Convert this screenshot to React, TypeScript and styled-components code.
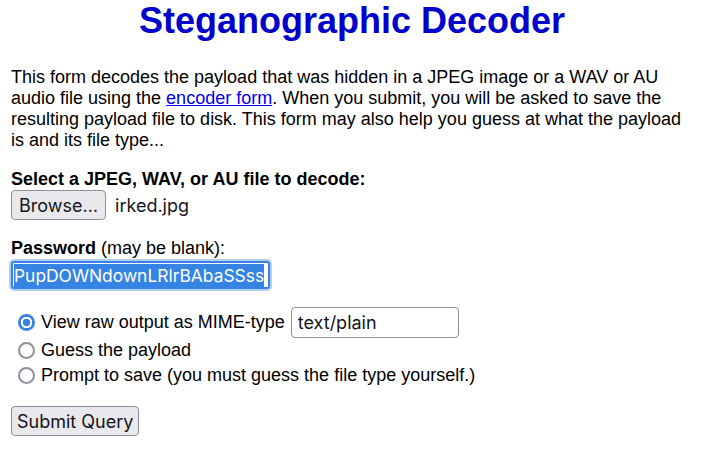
import styled, { createGlobalStyle } from "styled-components";

const GlobalStyle = createGlobalStyle`
  html, body {
    margin: 0;
    padding: 0;
    background: #ffffff;
  }
  body {
    font-family: "Liberation Sans", Arial, sans-serif;
    font-size: 18px;
    color: #000000;
  }
`;

const Page = styled.div`
  padding: 0 8px 0 11px;
`;

const Heading = styled.h1`
  margin: 0 0 25px 0;
  text-align: center;
  font-size: 36px;
  font-weight: bold;
  color: #0000cc;
`;

const Intro = styled.p`
  margin: 0 0 18px 0;
`;

const Link = styled.a`
  color: #0000ee;
  text-decoration: underline;
`;

const Field = styled.div`
  margin-bottom: 18px;
`;

const FieldRow = styled.div`
  display: flex;
  align-items: center;
  gap: 9px;
`;

const widgetFont = `"Inter", "Noto Sans", sans-serif`;

const Button = styled.button<{ $padX?: number }>`
  font-family: ${widgetFont};
  font-size: 18px;
  color: #15141a;
  background: #e9e9ed;
  border: 1px solid #8f8f9d;
  border-radius: 4px;
  height: 30px;
  padding: 0 ${({ $padX = 7 }) => $padX}px;
  margin: 0;
`;

const FileName = styled.span`
  font-family: ${widgetFont};
  font-size: 18px;
  color: #15141a;
`;

const PasswordBox = styled.div`
  display: flex;
  align-items: center;
  margin: 2px 0 0 0;
  height: 28px;
  width: 259px;
  box-sizing: border-box;
  padding: 0 1px 0 1px;
  border: 2px solid #3584e4;
  border-radius: 3px;
  box-shadow: 0 0 0 2px #b2cff3;
  background: #ffffff;
  overflow: hidden;
`;

const Selected = styled.span`
  font-family: ${widgetFont};
  font-size: 17.4px;
  line-height: 23px;
  background: #3584e4;
  color: #ffffff;
  white-space: nowrap;
`;

const Choices = styled.div`
  display: flex;
  flex-direction: column;
  padding-left: 7px;
  margin-bottom: 18px;
`;

const Choice = styled.label<{ $tall?: boolean }>`
  display: flex;
  align-items: center;
  height: ${({ $tall }) => ($tall ? "31px" : "25px")};
  gap: 6px;
`;

const Radio = styled.input.attrs({ type: "radio" })`
  appearance: none;
  margin: 0;
  width: 17px;
  height: 17px;
  border-radius: 50%;
  box-sizing: border-box;
  border: 2px solid #8f8f9d;
  background: #ffffff;

  &:checked {
    border: none;
    background: radial-gradient(
      circle,
      #3584e4 0 3.5px,
      #ffffff 4px 5.5px,
      #3584e4 6px
    );
  }
`;

const MimeInput = styled.input`
  font-family: ${widgetFont};
  font-size: 18px;
  color: #15141a;
  width: 168px;
  height: 31px;
  box-sizing: border-box;
  border: 1px solid #8f8f9d;
  border-radius: 4px;
  padding: 0 6px;
  margin: 0;
`;

export default function App() {
  return (
    <Page>
      <GlobalStyle />
      <Heading>Steganographic Decoder</Heading>
      <Intro>
        This form decodes the payload that was hidden in a JPEG image or a WAV
        or AU audio file using the <Link href="#">encoder form</Link>. When you
        submit, you will be asked to save the resulting payload file to disk.
        This form may also help you guess at what the payload is and its file
        type...
      </Intro>
      <Field>
        <b>Select a JPEG, WAV, or AU file to decode:</b>
        <FieldRow>
          <Button type="button">Browse…</Button>
          <FileName>irked.jpg</FileName>
        </FieldRow>
      </Field>
      <Field>
        <b>Password</b> (may be blank):
        <PasswordBox>
          <Selected>PupDOWNdownLRlrBAbaSSss</Selected>
        </PasswordBox>
      </Field>
      <Choices>
        <Choice $tall>
          <Radio name="mode" defaultChecked />
          View raw output as MIME-type
          <MimeInput defaultValue="text/plain" />
        </Choice>
        <Choice>
          <Radio name="mode" />
          Guess the payload
        </Choice>
        <Choice>
          <Radio name="mode" />
          Prompt to save (you must guess the file type yourself.)
        </Choice>
      </Choices>
      <Button type="submit" $padX={5}>
        Submit Query
      </Button>
    </Page>
  );
}
